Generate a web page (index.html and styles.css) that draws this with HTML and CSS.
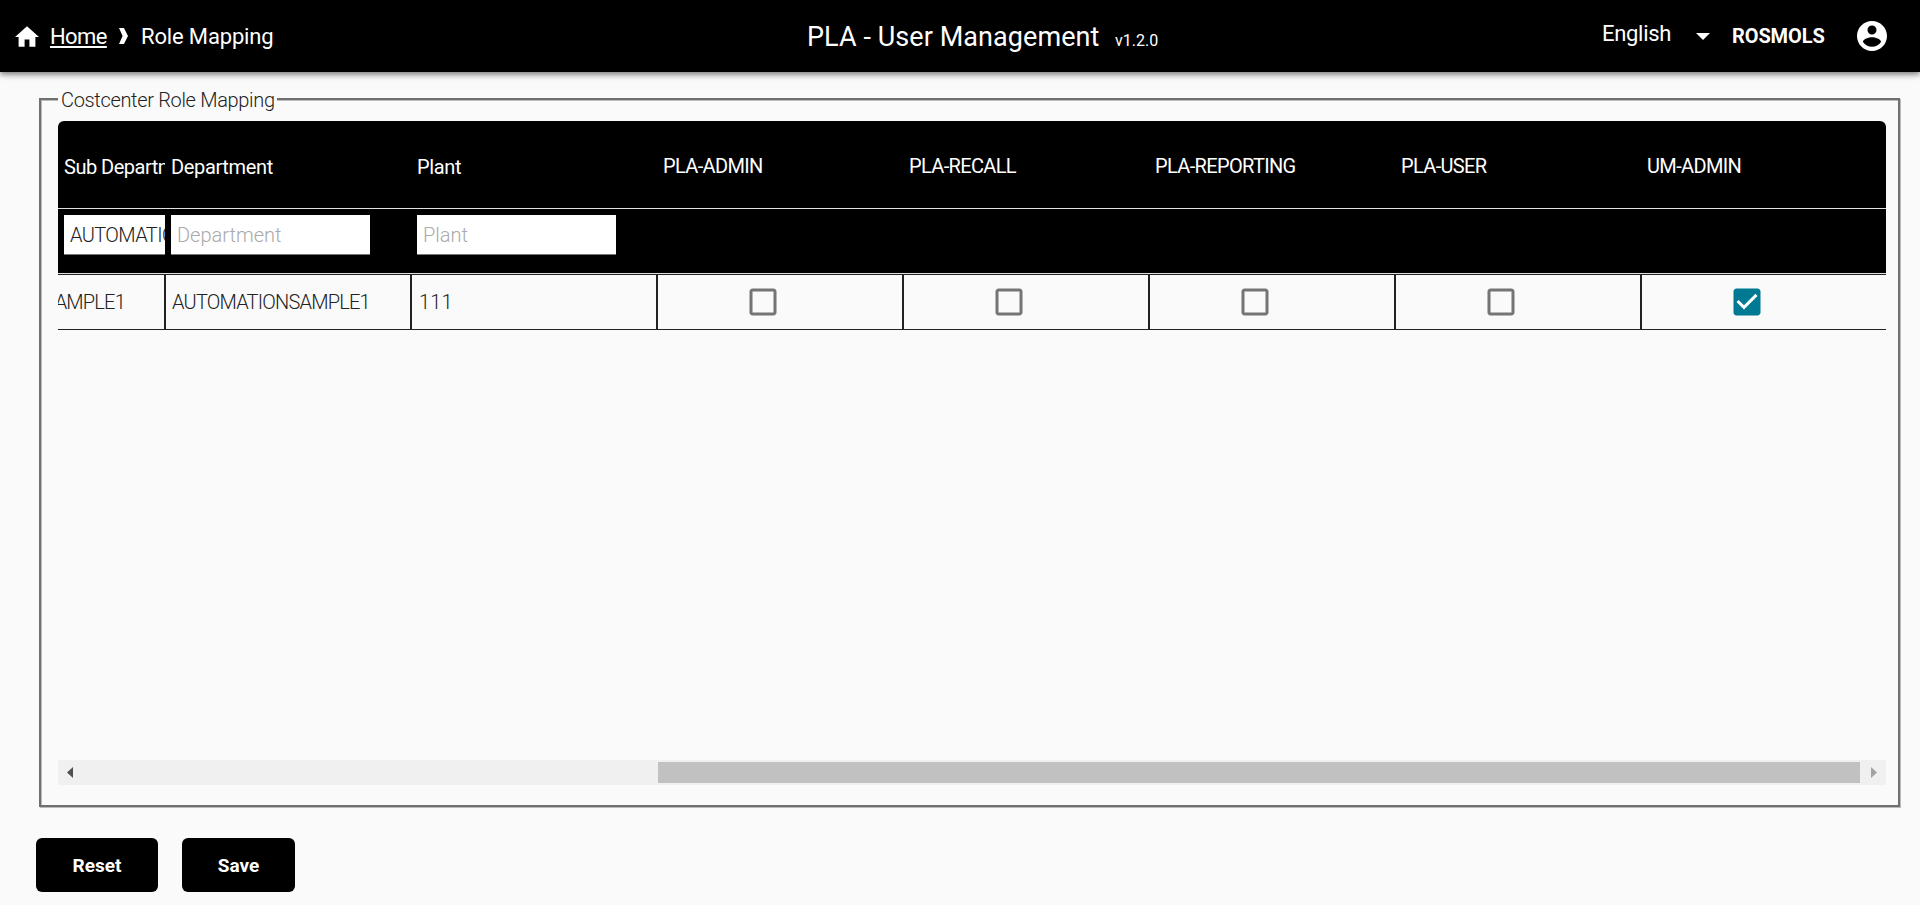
FILE: index.html
```html
<!DOCTYPE html>
<html lang="en">
<head>
<meta charset="utf-8">
<title>PLA - User Management</title>
<link rel="stylesheet" href="styles.css">
</head>
<body>
<header class="bar">
  <nav class="crumbs">
    <svg class="home-icon" viewBox="2 3 20 17"><path fill="#fff" d="M10 20v-6h4v6h5v-8h3L12 3 2 12h3v8z"/></svg>
    <a class="home">Home</a>
    <svg class="chev" viewBox="0 0 10 18"><path fill="#fff" d="M0 0h5.500L10 9 5.500 18H0L4 9z"/></svg>
    <span class="page">Role Mapping</span>
  </nav>
  <div class="title"><span class="name">PLA - User Management</span><span class="version">v1.2.0</span></div>
  <div class="account">
    <span class="lang">English</span>
    <svg class="caret" viewBox="0 0 14 7"><path fill="#fff" d="M0 0h14L7 7z"/></svg>
    <span class="user">ROSMOLS</span>
    <svg class="avatar" viewBox="2 2 20 20"><path fill="#fff" d="M12 2C6.480 2 2 6.480 2 12s4.480 10 10 10 10-4.480 10-10S17.520 2 12 2zm0 3c1.660 0 3 1.340 3 3s-1.340 3-3 3-3-1.340-3-3 1.340-3 3-3zm0 14.200c-2.500 0-4.710-1.280-6-3.220.03-1.990 4-3.080 6-3.080 1.990 0 5.970 1.090 6 3.080-1.290 1.940-3.500 3.220-6 3.220z"/></svg>
  </div>
</header>
<main>
  <section class="panel">
    <div class="legend"><span>Costcenter Role Mapping</span></div>
    <div class="table">
      <div class="row head">
        <div class="cell"><span class="sub">Sub Department</span></div>
        <div class="cell"><span>Department</span></div>
        <div class="cell"><span>Plant</span></div>
        <div class="cell role"><span>PLA-ADMIN</span></div>
        <div class="cell role"><span>PLA-RECALL</span></div>
        <div class="cell role"><span>PLA-REPORTING</span></div>
        <div class="cell role"><span>PLA-USER</span></div>
        <div class="cell role"><span>UM-ADMIN</span></div>
      </div>
      <div class="row filter">
        <div class="cell"><div class="field filled"><span>AUTOMATIONSAMPLE1</span></div></div>
        <div class="cell"><div class="field"><span>Department</span></div></div>
        <div class="cell"><div class="field"><span>Plant</span></div></div>
      </div>
      <div class="row data">
        <div class="cell first"><span>AUTOMATIONSAMPLE1</span></div>
        <div class="cell"><span>AUTOMATIONSAMPLE1</span></div>
        <div class="cell"><span class="num">111</span></div>
        <div class="cell check"><svg viewBox="0 0 24 24"><path fill="#757575" d="M19 5v14H5V5h14m0-2H5c-1.100 0-2 .9-2 2v14c0 1.100.9 2 2 2h14c1.100 0 2-.9 2-2V5c0-1.100-.9-2-2-2z"/></svg></div>
        <div class="cell check"><svg viewBox="0 0 24 24"><path fill="#757575" d="M19 5v14H5V5h14m0-2H5c-1.100 0-2 .9-2 2v14c0 1.100.9 2 2 2h14c1.100 0 2-.9 2-2V5c0-1.100-.9-2-2-2z"/></svg></div>
        <div class="cell check"><svg viewBox="0 0 24 24"><path fill="#757575" d="M19 5v14H5V5h14m0-2H5c-1.100 0-2 .9-2 2v14c0 1.100.9 2 2 2h14c1.100 0 2-.9 2-2V5c0-1.100-.9-2-2-2z"/></svg></div>
        <div class="cell check"><svg viewBox="0 0 24 24"><path fill="#757575" d="M19 5v14H5V5h14m0-2H5c-1.100 0-2 .9-2 2v14c0 1.100.9 2 2 2h14c1.100 0 2-.9 2-2V5c0-1.100-.9-2-2-2z"/></svg></div>
        <div class="cell check"><svg viewBox="0 0 24 24"><path fill="#fff" d="M4 4h16v16H4z"/><path fill="#007a93" d="M19 3H5c-1.110 0-2 .9-2 2v14c0 1.100.89 2 2 2h14c1.110 0 2-.9 2-2V5c0-1.100-.89-2-2-2zm-9 14l-5-5 1.410-1.410L10 14.170l7.590-7.590L19 8l-9 9z"/></svg></div>
      </div>
    </div>
    <div class="scroll">
      <svg class="arrow" viewBox="0 0 6 11"><path fill="#505050" d="M6 0v11L0 5.500z"/></svg>
      <div class="thumb"></div>
      <svg class="arrow" viewBox="0 0 6 11"><path fill="#a3a3a3" d="M0 0v11l6-5.500z"/></svg>
    </div>
  </section>
  <div class="actions">
    <button class="btn reset"><span>Reset</span></button>
    <button class="btn save"><span>Save</span></button>
  </div>
</main>
</body>
</html>
```
FILE: styles.css
```css
* { box-sizing: border-box; }
html { height: 100%; overflow: hidden; }
body { margin: 0; height: 905px; overflow: hidden; background: #fafafa; color: #222; font-family: Roboto, "Liberation Sans", sans-serif; font-size: 20px; }
svg { display: block; flex: none; }
span, a { white-space: nowrap; }

.bar { display: grid; grid-template-columns: 807px 1fr auto; height: 72px; background: #000; color: #fff; box-shadow: 0 2px 4px -1px rgba(0,0,0,.2), 0 4px 5px rgba(0,0,0,.14), 0 1px 10px rgba(0,0,0,.12), 0 2px 6px rgba(0,0,0,.2); }
.crumbs { display: flex; align-items: center; padding-left: 15px; font-size: 22px; }
.home-icon { width: 24px; height: 21px; margin-right: 11px; }
.home { width: 57px; text-decoration: underline; text-decoration-thickness: 2px; text-underline-offset: 2px; letter-spacing: -.6px; }
.chev { width: 9px; height: 18px; margin: 0 13px 0 12px; }
.page { letter-spacing: -.15px; }
.title { display: flex; align-items: baseline; padding-top: 20px; }
.name { width: 308px; font-size: 27px; line-height: 34px; letter-spacing: .07px; }
.version { font-size: 16px; }
.account { display: flex; align-items: center; padding-right: 33px; }
.lang { width: 94px; font-size: 22px; margin-top: -6px; letter-spacing: -.3px; }
.caret { width: 14px; height: 7px; margin-right: 22px; }
.user { width: 125px; font-size: 20px; font-weight: 700; margin-top: -1px; letter-spacing: -.1px; }
.avatar { width: 30px; height: 30px; }

.panel { margin: 26px 20px 0 39px; height: 709px; border: 2px solid #707070; box-shadow: 1px 1px 0 #bbb, inset 1px 1px 0 #bbb; padding: 0 12px 0 17px; }
.legend { display: flex; height: 24px; margin-top: -14px; font-weight: 300; line-height: 28px; letter-spacing: -.33px; }
.legend span { width: 219px; padding-left: 3px; background: #fafafa; }

.table { margin-top: 11px; height: 639px; overflow: hidden; border-radius: 6px 6px 0 0; }
.row { display: grid; grid-template-columns: 108px repeat(7, 246px); width: 1830px; }
.cell { display: flex; align-items: center; min-width: 0; overflow: hidden; }
.head { height: 88px; background: #000; color: #fff; border-bottom: 1px solid #e0e0e0; padding-top: 4px; letter-spacing: -.35px; }
.head .cell { padding-left: 5px; }
.head .cell:first-child, .filter .cell:first-child { padding-left: 6px; margin-right: 1px; }
.sub { letter-spacing: -.5px; }
.head .role { padding-bottom: 2px; letter-spacing: -.65px; }
.filter { height: 65px; background: #000; border-bottom: 1px solid #e0e0e0; }
.filter .cell { align-items: flex-start; padding: 6px 0 0 5px; }
.field { flex: none; width: 199px; height: 40px; background: #fff; border-bottom: 1px solid #777; padding-left: 6px; line-height: 40px; color: #aaa; font-weight: 300; overflow: hidden; }
.filled { color: #222; letter-spacing: -.6px; }
.data { height: 56px; border: solid #222; border-width: 1px 0; font-weight: 300; letter-spacing: -.8px; }
.data .cell { border-right: 2px solid #222; padding-left: 6px; }
.data .first { justify-content: flex-end; padding: 0 39px 0 0; }
.num { padding-left: 1px; letter-spacing: .2px; }
.data .check { padding-left: 87px; }
.check svg { width: 36px; height: 36px; }

.scroll { display: flex; align-items: center; height: 25px; background: #f0f0f0; padding: 0 9px; }
.arrow { width: 6px; height: 11px; }
.thumb { width: 1202px; height: 21px; margin: 0 11px 0 585px; background: #c1c1c1; }

.actions { display: flex; gap: 24px; padding: 31px 0 0 36px; }
.btn { height: 54px; border: 0; border-radius: 6px; background: #000; color: #fff; font: 700 19px Roboto, sans-serif; padding: 0; }
.reset { width: 122px; }
.save { width: 113px; }
```
